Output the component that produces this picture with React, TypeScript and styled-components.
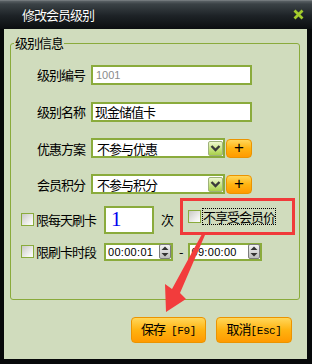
import React from "react";
import styled, {createGlobalStyle} from "styled-components";

const GlobalStyle = createGlobalStyle`
  html, body {
    margin: 0;
    padding: 0;
    background: #000;
  }
`;

const CJK = `"Noto Sans CJK SC", "Noto Sans", sans-serif`;

const Dialog = styled.div`
  position: relative;
  width: 312px;
  height: 364px;
  background: #07090a;
  display: flex;
  flex-direction: column;
  font-family: ${CJK};
  font-size: 13px;
  letter-spacing: -1px;
  color: #000;
`;

const TitleBar = styled.div`
  height: 29px;
  flex: none;
  display: flex;
  align-items: center;
  justify-content: space-between;
  padding: 0 8px 0 22px;
  background: linear-gradient(#8c9194 0, #596064 1px, #3b4246 4px, #1d2226 16px, #0b0e10 29px);
  color: #fff;
  text-shadow: 0 0 1px #000;
`;

const Body = styled.div`
  flex: 1;
  margin: 0 5px 5px 4px;
  padding: 6px 7px 0 6px;
  background: #d0dcbd;
  display: flex;
  flex-direction: column;
`;

const Group = styled.fieldset`
  margin: 0;
  min-width: 0;
  padding: 5px 0 33px 3px;
  border: 1px solid #8aab3c;
  border-radius: 3px;
`;

const Legend = styled.legend`
  padding: 0 1px;
  line-height: 16px;
`;

const Row = styled.div<{ $h: number }>`
  height: ${p => p.$h}px;
  display: flex;
  align-items: center;
`;

const Label = styled.span`
  width: 71px;
  margin-right: 6px;
  text-align: right;
  white-space: nowrap;
`;

const TextBox = styled.div<{ $w: number; $h?: number }>`
  box-sizing: border-box;
  width: ${p => p.$w}px;
  height: ${p => p.$h ?? 20}px;
  border: 2px solid #8aab3c;
  background: #fff;
  display: flex;
  align-items: center;
  padding-left: 2px;
  white-space: nowrap;
`;

const Code = styled.span`
  font-family: "Liberation Sans", Arial, sans-serif;
  font-size: 11px;
  letter-spacing: 0;
  color: #8a8a8a;
  padding-left: 1px;
`;

const Count = styled.span`
  font-family: "Liberation Serif", serif;
  font-size: 21px;
  letter-spacing: 0;
  color: #0000f0;
  padding-left: 3px;
`;

const TimeText = styled.span`
  flex: 1;
  font-family: "Liberation Sans", Arial, sans-serif;
  font-size: 11px;
  letter-spacing: 0.3px;
`;

const DropBtn = styled.div`
  box-sizing: border-box;
  width: 15px;
  height: 15px;
  margin-left: auto;
  border: 1px solid #9fb27a;
  border-radius: 2px;
  background: linear-gradient(#eef8d0, #c4e27a 60%, #a9d04c);
  display: flex;
  align-items: center;
  justify-content: center;
`;

const OrangeBtn = styled.button<{ $w: number; $h: number }>`
  box-sizing: border-box;
  width: ${p => p.$w}px;
  height: ${p => p.$h}px;
  padding: 0;
  border: 1px solid #eb9400;
  border-radius: 4px;
  background: linear-gradient(#ffd75a, #ffb310 50%, #ff9a00);
  font-family: ${CJK};
  font-size: 13px;
  letter-spacing: -1px;
  color: #000;
  display: flex;
  align-items: center;
  justify-content: center;
`;

const Caption = styled.span`
  white-space: nowrap;
  line-height: 16px;
`;

const Plus = styled.span`
  font-family: "Liberation Sans", Arial, sans-serif;
  font-size: 17px;
  line-height: 1;
  letter-spacing: 0;
  margin-top: -2px;
`;

const Mono = styled.span<{ $gap?: number }>`
  font-family: "Liberation Mono", monospace;
  font-size: 11px;
  letter-spacing: -0.4px;
  margin-left: ${p => p.$gap ?? 0}px;
`;

const Check = styled.span<{ $ml: number }>`
  box-sizing: border-box;
  flex: none;
  width: 13px;
  height: 13px;
  margin-left: ${p => p.$ml}px;
  border: 1px solid #8aab3c;
  background: linear-gradient(135deg, #c9c9c6, #f2f2f0 70%, #fff);
`;

const CheckText = styled.span`
  margin-left: 2px;
  white-space: nowrap;
`;

const Unit = styled.span`
  margin-left: 7px;
`;

const Highlight = styled.div`
  box-sizing: border-box;
  align-self: flex-start;
  margin: -4px 0 0 7px;
  width: 115px;
  height: 37px;
  border: 3px solid #f03a3a;
  padding-left: 5px;
  display: flex;
  align-items: center;
`;

const FocusText = styled.span`
  margin-left: 2px;
  outline: 1px dotted #000;
  line-height: 15px;
  white-space: nowrap;
`;

const Spinner = styled.div`
  box-sizing: border-box;
  width: 12px;
  height: 15px;
  border: 1px solid #7c7c7c;
  border-radius: 2px;
  background: linear-gradient(#f4f4f4, #bdbdbd);
  display: flex;
  align-items: center;
  justify-content: center;
`;

const Dash = styled.span`
  margin: 0 4px 0 6px;
  letter-spacing: 0;
`;

const Buttons = styled.div`
  margin-top: 17px;
  padding-right: 8px;
  display: flex;
  justify-content: flex-end;
  gap: 10px;
`;

const Overlay = styled.svg`
  position: absolute;
  left: 0;
  top: 0;
  pointer-events: none;
`;

const Chevron = () => (
    <svg width="11" height="8" viewBox="0 0 11 8">
        <path d="M1.5 2 L5.5 6 L9.5 2" stroke="#3a3a3a" strokeWidth="2.4" fill="none"/>
    </svg>
);

const SpinArrows = () => (
    <svg width="8" height="11" viewBox="0 0 8 11">
        <path d="M4 0.5 L7.5 4 L0.5 4 Z M4 10.5 L7.5 7 L0.5 7 Z" fill="#333"/>
    </svg>
);

const Select: React.FC<{ text: string }> = ({text}) => (
    <>
        <TextBox $w={134}>
            <span style={{paddingLeft: 2}}>{text}</span>
            <DropBtn><Chevron/></DropBtn>
        </TextBox>
        <OrangeBtn $w={26} $h={19} style={{marginLeft: 1}}><Plus>+</Plus></OrangeBtn>
    </>
);

const TimeBox: React.FC<{ value: string; w: number }> = ({value, w}) => (
    <TextBox $w={w} $h={18}>
        <TimeText>{value}</TimeText>
        <Spinner><SpinArrows/></Spinner>
    </TextBox>
);

const App: React.FC = () => {
    return (
        <>
            <GlobalStyle/>
            <Dialog>
                <TitleBar>
                    <span>修改会员级别</span>
                    <svg width="11" height="11" viewBox="0 0 11 11">
                        <path d="M1.5 1.5 L9.5 9.5 M9.5 1.5 L1.5 9.5" stroke="#a4cc2c" strokeWidth="2.8"/>
                    </svg>
                </TitleBar>
                <Body>
                    <Group>
                        <Legend>级别信息</Legend>
                        <Row $h={37}>
                            <Label>级别编号</Label>
                            <TextBox $w={161}><Code>1001</Code></TextBox>
                        </Row>
                        <Row $h={37}>
                            <Label>级别名称</Label>
                            <TextBox $w={161}>现金储值卡</TextBox>
                        </Row>
                        <Row $h={36}>
                            <Label>优惠方案</Label>
                            <Select text="不参与优惠"/>
                        </Row>
                        <Row $h={36}>
                            <Label>会员积分</Label>
                            <Select text="不参与积分"/>
                        </Row>
                        <Row $h={35}>
                            <Check $ml={7}/>
                            <CheckText>限每天刷卡</CheckText>
                            <TextBox $w={50} $h={28} style={{marginLeft: 8}}><Count>1</Count></TextBox>
                            <Unit>次</Unit>
                            <Highlight>
                                <Check $ml={0}/>
                                <FocusText>不享受会员价</FocusText>
                            </Highlight>
                        </Row>
                        <Row $h={29}>
                            <Check $ml={7}/>
                            <CheckText>限刷卡时段</CheckText>
                            <span style={{marginLeft: 8}}/>
                            <TimeBox value="00:00:01" w={69}/>
                            <Dash>-</Dash>
                            <TimeBox value="09:00:00" w={74}/>
                        </Row>
                    </Group>
                    <Buttons>
                        <OrangeBtn $w={75} $h={26}><Caption>保存<Mono $gap={6}>[F9]</Mono></Caption></OrangeBtn>
                        <OrangeBtn $w={76} $h={26}><Caption>取消<Mono>[Esc]</Mono></Caption></OrangeBtn>
                    </Buttons>
                </Body>
                <Overlay width="312" height="364" viewBox="0 0 312 364">
                    <polygon
                        points="202,234 205,235 180,293 186,299 166,312 165,284 172,289"
                        fill="#f23c3c"
                    />
                </Overlay>
            </Dialog>
        </>
    );
};

export default App;
